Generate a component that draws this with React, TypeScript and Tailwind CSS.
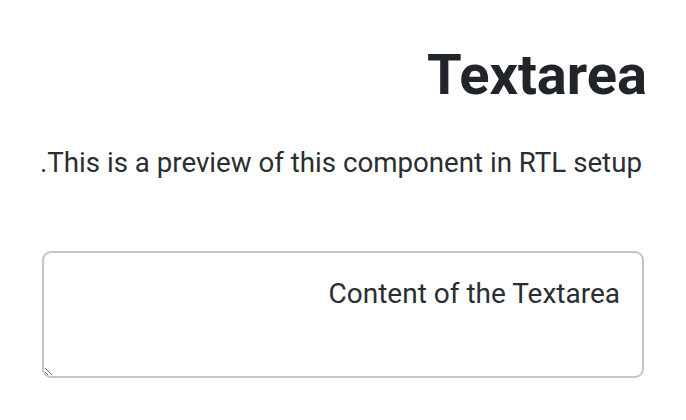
export default function App() {
  return (
    <div
      dir="rtl"
      className="min-h-screen bg-white px-[42px] pt-[39px] text-[#24292e]"
      style={{ fontFamily: "Roboto, 'Liberation Sans', sans-serif" }}
    >
      <h1 className="-ml-[3px] -mr-[3px] text-[56px] font-bold leading-[72px] text-[#212529]">Textarea</h1>
      <p className="mt-[32px] whitespace-nowrap text-[27.7px] leading-[40px] text-[#2a2e33] pr-[2px]">
        This is a preview of this component in RTL setup.
      </p>
      <textarea
        defaultValue="Content of the Textarea"
        className="mt-[68px] block h-[127px] w-full rounded-[9px] border-2 border-[#bcc7d4] px-[22px] pt-[21px] text-[28px] leading-[40px] text-[#2a2e33] outline-none"
        style={{ fontFamily: "Roboto, 'Liberation Sans', sans-serif" }}
      />
    </div>
  );
}
